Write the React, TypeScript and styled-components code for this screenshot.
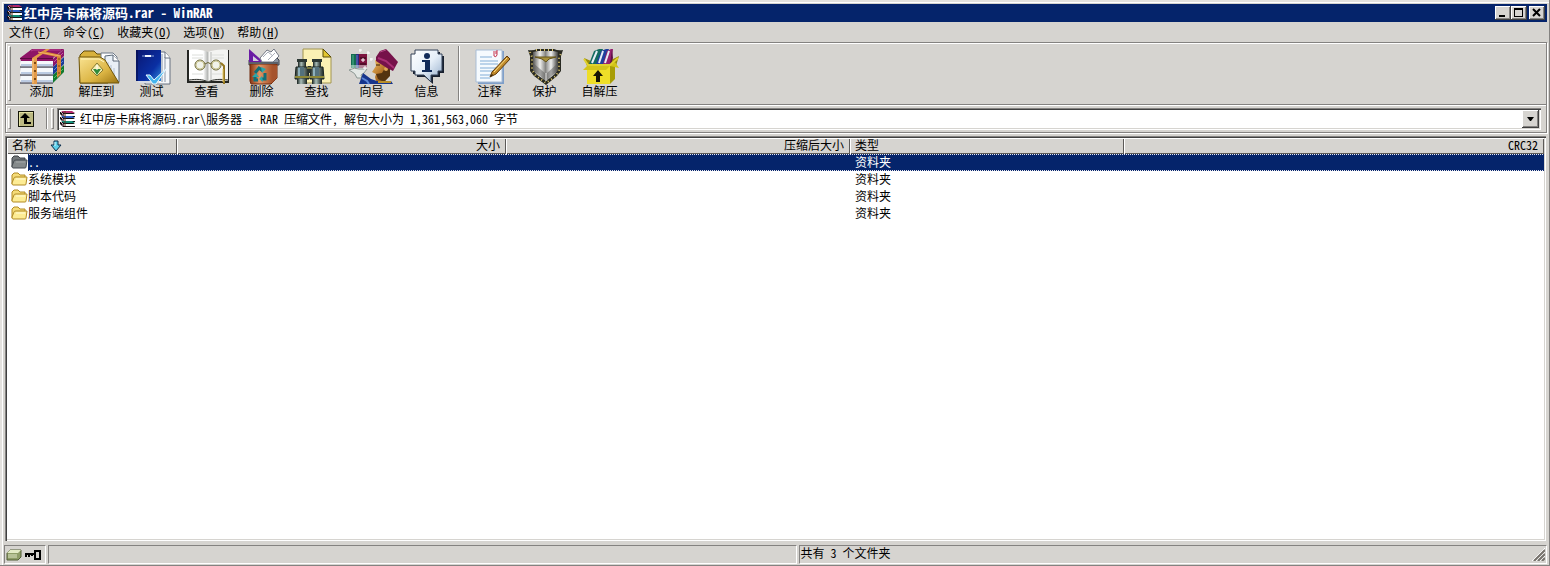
import React, { useState } from "react";
import styled, { createGlobalStyle, css } from "styled-components";

const face = "#d6d4d0";
const shadow = "#848280";
const light = "#ffffff";
const navy = "#05246b";

const GlobalStyle = createGlobalStyle`
  * { box-sizing: border-box; }
  body { margin: 0; background: ${face}; }
  body, button, select, table {
    font-family: "Noto Sans Mono CJK SC", "Noto Sans CJK SC", monospace;
    font-size: 12px;
    line-height: 16px;
    color: #000;
  }
  button { border: 0; padding: 0; background: none; }
`;

const raised = css`
  background: ${face};
  box-shadow: inset -1px -1px #404040, inset 1px 1px ${light}, inset -2px -2px ${shadow};
`;

const Window = styled.div`
  display: flex;
  flex-direction: column;
  min-height: 100vh;
  padding: 4px 3px 2px 4px;
  background: ${face};
  box-shadow: inset -1px -1px ${shadow}, inset 2px 2px #e4e2df, inset 3px 3px ${light};
`;

const TitleBar = styled.header`
  display: flex;
  align-items: center;
  height: 18px;
  padding: 0 2px;
  background: ${navy};
  color: #fff;
`;

const Title = styled.h1`
  flex: 1;
  margin: 0 0 0 1px;
  font-size: 13px;
  line-height: 18px;
  font-weight: 700;
`;

const CaptionButton = styled.button<{ $apart?: boolean }>`
  ${raised}
  display: grid;
  place-items: center;
  width: 16px;
  height: 14px;
  margin-left: ${(p) => (p.$apart ? 2 : 0)}px;
`;

const MenuBar = styled.nav`
  display: flex;
  height: 20px;
`;

const MenuItem = styled.button`
  padding: 0 7px 0 5px;
  line-height: 18px;
`;

const Rebar = styled.div`
  margin-left: 1px;
  border: 1px solid ${shadow};
  box-shadow: inset 1px 1px ${light}, 1px 1px ${light};
`;

const Band = styled.div<{ $height: number }>`
  display: flex;
  align-items: center;
  height: ${(p) => p.$height}px;
  padding: 2px 5px 2px 1px;
  & + & {
    border-top: 1px solid ${shadow};
    box-shadow: inset 0 1px ${light};
  }
`;

const Gripper = styled.span`
  align-self: stretch;
  width: 3px;
  margin: 1px 3px 1px 1px;
  border: 1px solid;
  border-color: ${light} ${shadow} ${shadow} ${light};
`;

const Divider = styled.span`
  align-self: stretch;
  width: 2px;
  margin: 1px 2px 1px 4px;
  border-left: 1px solid ${shadow};
  border-right: 1px solid ${light};
`;

const ToolButton = styled.button`
  display: flex;
  flex-direction: column;
  align-items: center;
  width: 55px;
  height: 52px;
  line-height: 10px;
`;

const UpButton = styled.button`
  display: grid;
  place-items: center;
  width: 24px;
  height: 20px;
  margin-right: 4px;
`;

const Combo = styled.div`
  flex: 1;
  display: grid;
  grid-template-columns: 20px 1fr 17px;
  align-items: center;
  height: 22px;
  padding: 2px;
  background: #fff;
  box-shadow: inset 1px 1px ${shadow}, inset 2px 2px #404040, inset -1px -1px ${light}, inset -2px -2px ${face};
`;

const PathSelect = styled.select`
  grid-area: 1 / 2 / 2 / 4;
  appearance: none;
  min-width: 0;
  height: 18px;
  padding: 0 1px;
  border: 0;
  border-radius: 0;
  outline: 0;
  background: transparent;
`;

const ComboArrow = styled.span`
  ${raised}
  grid-area: 1 / 3;
  display: grid;
  place-items: center;
  height: 18px;
  pointer-events: none;
`;

const ListPane = styled.main`
  flex: 1;
  margin: 3px 1px 4px;
  padding: 2px;
  background: #fff;
  box-shadow: inset 1px 1px ${shadow}, inset 2px 2px #404040, inset -1px -1px ${light}, inset -2px -2px ${face};
`;

const FileTable = styled.table`
  width: 100%;
  table-layout: fixed;
  border-collapse: collapse;
`;

const HeadCell = styled.th<{ $right?: boolean }>`
  height: 16px;
  padding: 0 6px 0 5px;
  background: ${face};
  box-shadow: inset 0 1px ${light}, inset 1px 0 ${light}, inset -1px -1px #5c5a58;
  font-weight: 400;
  line-height: 14px;
  vertical-align: top;
  text-align: ${(p) => (p.$right ? "right" : "left")};
  svg { margin-left: 14px; vertical-align: -2px; }
`;

const FileRow = styled.tr<{ $selected: boolean }>`
  ${(p) =>
    p.$selected &&
    css`
      color: #fff;
      td {
        background:
          repeating-linear-gradient(90deg, #e8e8f0 0 1px, ${navy} 1px 2px) top / 100% 1px no-repeat,
          repeating-linear-gradient(90deg, #e8e8f0 0 1px, ${navy} 1px 2px) bottom / 100% 1px no-repeat,
          ${navy};
      }
    `}
`;

const Cell = styled.td<{ $right?: boolean }>`
  height: 17px;
  padding: 0 5px;
  line-height: 15px;
  vertical-align: top;
  text-align: ${(p) => (p.$right ? "right" : "left")};
`;

const NameCell = styled(Cell)`
  padding: 0;
`;

const NameLine = styled.span`
  display: flex;
  align-items: flex-start;
`;

const IconWell = styled.span`
  display: grid;
  place-items: center end;
  width: 21px;
  height: 17px;
  background: #fff;
`;

const StatusBar = styled.footer`
  display: grid;
  grid-template-columns: 42px 1fr 1fr;
  gap: 2px;
  height: 19px;
`;

const Pane = styled.div`
  display: flex;
  align-items: center;
  gap: 3px;
  padding: 0 1px;
  border: 1px solid;
  border-color: ${shadow} ${light} ${light} ${shadow};
`;

const PaneText = styled.span`
  flex: 1;
  align-self: flex-start;
  line-height: 14px;
`;

const Art = ({ children }: { children: React.ReactNode }) => (
  <svg width="54" height="38" viewBox="0 0 54 38" aria-hidden="true">
    {children}
  </svg>
);

const AddIcon = () => (
  <Art>
    {[
      ["#8c1569", "#c7569f", 12],
      ["#1b3c98", "#5b82dd", 20],
      ["#127a2e", "#4fc06c", 28],
    ].map(([a, b, y]) => {
      const t = Number(y);
      return (
        <g key={t}>
          <path d={`M6 ${t}H38V${t + 7}H6L5 ${t + 4}Z`} fill="#f6f8fb" />
          <path d={`M6 ${t + 5}H38`} stroke="#bccbe2" strokeWidth="2" />
          <path d={`M5 ${t + 7}H38`} stroke="#1c2136" />
          <path d={`M38 ${t - 1}L49 ${t - 11}V${t - 4}L38 ${t + 7}Z`} fill={String(a)} />
          <path d={`M39 ${t + 2}L48 ${t - 7}`} stroke={String(b)} />
        </g>
      );
    })}
    <path d="M5 10L17 1H49L38 10V13H6Z" fill="#8f1466" />
    <path d="M16 3L18 2H46" fill="none" stroke="#b8438f" />
    <path d="M5 10.5H38" stroke="#5c0a40" />
    <path d="M17 10L31 1H35L22 10V36H17Z" fill="#e39a4a" />
    <path d="M23 5L28 3L46 7V26L42 30V9Z" fill="#d98537" />
    <path d="M23 4L45 8" stroke="#f2b469" />
    <path d="M18 11V35" stroke="#f8c988" />
    <path d="M20 14V35" stroke="#7a4812" strokeDasharray="2 6" strokeWidth="2" />
    <path d="M44 10V27" stroke="#7a4812" strokeDasharray="2 5" />
  </Art>
);

const ExtractIcon = () => (
  <Art>
    <defs>
      <linearGradient id="gFolder" x1="0" y1="0" x2="1" y2="1">
        <stop offset="0" stopColor="#f9e391" />
        <stop offset=".6" stopColor="#dcb544" />
        <stop offset="1" stopColor="#9b7412" />
      </linearGradient>
    </defs>
    <path d="M10 35V7L14 3H24L27 6H38V35Z" fill="#d8b13c" stroke="#5e4a0a" />
    <path d="M31 5H43L47 9V31H31Z" fill="#fff" stroke="#6c7888" />
    <path d="M35 8L43 7L49 13V34H35Z" fill="#e9f0f7" stroke="#596777" />
    <path d="M43 7V13H49" fill="#fff" stroke="#596777" />
    <path d="M38 14V32M41 17V32M44 20V32" stroke="#b5c3d4" />
    <path d="M9 9H30L35 12L49 35H10Z" fill="url(#gFolder)" stroke="#6e5409" />
    <path d="M11 11H29L34 14" fill="none" stroke="#fff6bd" />
    <path d="M27 15L33 22L27 28L21 22Z" fill="#f5eeb1" stroke="#847a33" />
    <path d="M23 21H31L27 27Z" fill="#2f8a3c" />
    <path d="M27 17V22" stroke="#fff" />
  </Art>
);

const TestIcon = () => (
  <Art>
    <defs>
      <linearGradient id="gBook" x1="0" y1="0" x2="1" y2="1">
        <stop offset="0" stopColor="#0a1670" />
        <stop offset=".65" stopColor="#0a2fa3" />
        <stop offset="1" stopColor="#3089dd" />
      </linearGradient>
    </defs>
    <path d="M30 4H40L45 10V36H20V32H30Z" fill="#f5f7fa" stroke="#677080" />
    <path d="M37 6V34M40 9V34" stroke="#8995a7" />
    <path d="M40 4V10H45" fill="#fff" stroke="#677080" />
    <path d="M11 2H36V33H11Z" fill="url(#gBook)" />
    <path d="M12 2V33" stroke="#040b43" />
    <path d="M17 8H29" stroke="#8fa9d9" />
    <path d="M20 8H26" stroke="#f2f6ff" strokeWidth="2" />
    <path d="M12 33H34V35H14Z" fill="#d7dce5" />
    <path d="M21 27L25 27L29 32L42 20L31 36H28Z" fill="#45b5ee" stroke="#eefaff" />
  </Art>
);

const ViewIcon = () => (
  <Art>
    <defs>
      <linearGradient id="gPage" x1="0" x2="1">
        <stop offset="0" stopColor="#fff" />
        <stop offset=".75" stopColor="#fff" />
        <stop offset="1" stopColor="#aeb0ae" />
      </linearGradient>
    </defs>
    <path d="M7 2H9V33H48V2H49V35H7Z" fill="#242522" />
    <path d="M9 2C16 1 24 2 28 4V34C23 31 16 31 9 32Z" fill="url(#gPage)" />
    <path d="M48 2C41 1 33 2 28 4V34C33 31 41 31 48 32Z" fill="#f4f4f2" />
    <path d="M28 4V34M31 4V32" stroke="#b8bab8" />
    <path d="M9 32C16 31 23 31 28 34C33 31 41 31 48 32" fill="none" stroke="#353733" />
    <path d="M12 7H23M12 10H23M32 7H44M32 10H44M12 26H23M32 26H44" stroke="#dcdedb" />
    <g fill="none" stroke="#686332" strokeWidth="1">
      <circle cx="20" cy="17" r="5" fill="#f1f3ea" />
      <circle cx="36" cy="17" r="5" fill="#f1f3ea" />
      <circle cx="20" cy="17" r="4" stroke="#c9c48f" />
      <circle cx="36" cy="17" r="4" stroke="#c9c48f" />
      <path d="M25 16Q28 13 31 16" />
      <path d="M41 15L44 18V36" stroke="#967820" strokeWidth="2" />
    </g>
    <path d="M43 21V34" stroke="#e7ca69" />
  </Art>
);

const DeleteIcon = () => (
  <Art>
    <defs>
      <linearGradient id="gBin" x1="0" x2="1">
        <stop offset="0" stopColor="#863414" />
        <stop offset=".35" stopColor="#e09565" />
        <stop offset="1" stopColor="#913a16" />
      </linearGradient>
    </defs>
    <path d="M14 12L17 9L20 13H38L41 9L44 12V17H14Z" fill="#8e95a2" stroke="#3d414a" />
    <path d="M14 16V1L31 16Z" fill="#6a1aa4" />
    <path d="M18 13V8L24 13Z" fill="#d5d0dd" />
    <path d="M25 10L32 2L36 4L39 1L44 8L38 14H27Z" fill="#fff" stroke="#727784" />
    <path d="M28 9L33 4L38 8M33 12L40 5" fill="none" stroke="#a9adb8" />
    <path d="M15 16H42V30L36 36H16L15 33Z" fill="url(#gBin)" stroke="#702a0d" />
    <path d="M14 15H43" stroke="#5b6069" strokeWidth="2" />
    <path d="M37 18L42 17V30L37 35Z" fill="#a6532d" />
    <g fill="none" stroke="#126f77" strokeWidth="3">
      <path d="M20 25L24 20L28 23" />
      <path d="M30 25L30 31H26" />
      <path d="M23 32H20V28" />
    </g>
    <path d="M26 19L31 21L27 25ZM27 28L24 31L28 34ZM17 29L21 25L24 29Z" fill="#2aa7aa" />
  </Art>
);

const FindIcon = () => (
  <Art>
    <defs>
      <linearGradient id="gBarrel" x1="0" x2="1">
        <stop offset="0" stopColor="#17201c" />
        <stop offset=".4" stopColor="#a9bdb8" />
        <stop offset="1" stopColor="#17201c" />
      </linearGradient>
    </defs>
    <path d="M13 1H33L41 9V35H13Z" fill="#fbf1b4" stroke="#a19451" />
    <path d="M33 1V9H41Z" fill="#e2c62f" stroke="#5b4d09" />
    {[5, 20].map((x) => (
      <g key={x} transform={`translate(${x} 0)`}>
        <path d="M3 11H11V19H3Z" fill="url(#gBarrel)" />
        <path d="M2 11H12V14H2Z" fill="#2c3733" />
        <path d="M1 19H13L14 31H0Z" fill="url(#gBarrel)" stroke="#1b2420" />
        <path d="M3 19H9V28H3Z" fill="#54717c" />
        <path d="M0 28H14V30H0Z" fill="#8d8736" />
        <path d="M2 31H12V36H2Z" fill="url(#gBarrel)" />
        <path d="M4 20V28" stroke="#8eb0bb" strokeWidth="2" />
      </g>
    ))}
    <path d="M18 18H21V25H18Z" fill="#29332f" />
    <path d="M17 20H22" stroke="#bfb447" />
  </Art>
);

const WizardIcon = () => (
  <Art>
    <defs>
      <linearGradient id="gSkin" x1="0" y1="0" x2="1" y2="1">
        <stop offset="0" stopColor="#f0c065" />
        <stop offset=".5" stopColor="#b9792c" />
        <stop offset="1" stopColor="#5e3513" />
      </linearGradient>
    </defs>
    <path d="M6 6H11V20H6Z" fill="#156a51" />
    <path d="M11 6H14V20H11Z" fill="#2b2b7c" />
    <path d="M14 6H22V20H14Z" fill="#7d143f" />
    <path d="M8 7V20" stroke="#4fb78d" />
    <path d="M12 7V20" stroke="#6a7bd0" />
    <path d="M15 10H21M15 16H21" stroke="#2a0715" />
    <path d="M6 17H22V21H6Z" fill="#e7f3ee" opacity=".5" />
    <path d="M4 22Q10 19 14 21L22 21L19 25L16 27L17 30H12Q11 25 4 22Z" fill="#e3e8e5" stroke="#8c9894" />
    <path d="M14 36L18 25L26 31L32 33H46L48 36Z" fill="#16358c" />
    <path d="M17 30L22 33L24 36" fill="none" stroke="#5c86d6" strokeWidth="2" />
    <path d="M30 12L45 16V27L40 33H31L30 29L31 26L27 24L31 18Z" fill="url(#gSkin)" />
    <path d="M31 26L37 25L40 20H45V28L39 34L33 31Z" fill="#54330f" />
    <circle cx="41" cy="21" r="2" fill="#e0a657" />
    <path d="M31 17H35" stroke="#3d2108" />
    <path d="M31 9L35 3L41 1L44 4L53 14L48 23L42 20L31 13Z" fill="#76124a" />
    <path d="M33 10L41 13L49 20" fill="none" stroke="#a92f74" strokeWidth="2" />
    <path d="M35 4L41 2" stroke="#b14a85" />
    <path d="M33 34H46" stroke="#b98f28" strokeWidth="2" />
    <path d="M15 1V4M14 2H17M23 3V6M22 5H25M26 10V13M25 11H28M18 10V14M16 12H20M20 18V22M18 20H22" stroke="#fff" />
  </Art>
);

const InfoIcon = () => (
  <Art>
    <defs>
      <linearGradient id="gBalloon" x1="0" y1="0" x2="1" y2="1">
        <stop offset="0" stopColor="#fff" />
        <stop offset=".5" stopColor="#e6eff8" />
        <stop offset="1" stopColor="#8fa9c8" />
      </linearGradient>
    </defs>
    <path d="M17 4H40V8H44V25H40V29H33V36L25 29H17V26H13V8H17Z" fill="#18202e" />
    <path
      d="M15 2H38V6H42V23H38V27H31V34L24 27H15V23H11V6H15Z"
      fill="url(#gBalloon)"
      stroke="#344258"
    />
    <circle cx="27" cy="8" r="3" fill="#112b58" />
    <path d="M22 12H30V22H32V24H22V22H25V14H22Z" fill="#112b58" />
  </Art>
);

const CommentIcon = () => (
  <Art>
    <path d="M15 3H41V36H15Z" fill="#7f9fc9" />
    <path d="M13 2H39V34H13Z" fill="#f5fafe" stroke="#a9bdd5" />
    <path d="M17 9H29M17 13H35M17 16H35M17 20H33M17 23H31M17 27H28M17 30H27" stroke="#82add6" />
    <path d="M31 3V8Q33 10 34 7V2M33 3V6" fill="none" stroke="#c6324c" />
    <path d="M27 29L29 24L44 8L47 11L33 26Z" fill="#c08a2a" stroke="#5d3809" />
    <path d="M31 24L44 10" stroke="#ffe088" />
    <path d="M27 29L29 26L30 27Z" fill="#23180b" />
  </Art>
);

const ProtectIcon = () => (
  <Art>
    <defs>
      <linearGradient id="gShield" x1="0" x2="1">
        <stop offset="0" stopColor="#555553" />
        <stop offset=".28" stopColor="#efefed" />
        <stop offset=".5" stopColor="#868683" />
        <stop offset=".72" stopColor="#f0f0ef" />
        <stop offset="1" stopColor="#3d3d3b" />
      </linearGradient>
    </defs>
    <path d="M10 2Q15 3 19 1H36Q40 3 45 2L43 8V23L39 28L28 37L16 28L12 23V8Z" fill="#292a22" />
    <path d="M15 4L20 3H35L40 4V22L37 26L28 33L18 26L15 22Z" fill="url(#gShield)" />
    <path d="M15 15L28 26L40 15V22L28 33L15 22Z" fill="#5c5c5a" opacity=".5" />
    <path d="M28 25V33" stroke="#efefed" />
    <path d="M17 9H38L31 11L28 14L24 11Z" fill="#a7903b" stroke="#655419" />
    <path
      d="M12 4L14 9V22L18 28L28 35L38 28L41 22V9L44 4M18 2H38"
      fill="none"
      stroke="#ddc66c"
      strokeDasharray="1 3"
      strokeWidth="2"
    />
  </Art>
);

const SfxIcon = () => (
  <Art>
    <path d="M11 10L18 13L40 11L46 8L43 18H14Z" fill="#998d08" />
    <path d="M16 16L21 3L26 1H30L25 16Z" fill="#136a5f" />
    <path d="M23 16L28 3L33 1H36L31 16Z" fill="#1f3f9e" />
    <path d="M30 16L34 3L38 1H40L38 16Z" fill="#962271" />
    <path d="M19 15L24 3M26 15L30 3M32 15L36 3" stroke="#e5edf5" strokeWidth="2" />
    <path d="M37 16L39 1L40 10L38 16Z" fill="#5d1146" />
    <path d="M14 18H37V36H14Z" fill="#eede28" />
    <path d="M37 18L42 14V31L37 36Z" fill="#a89d06" />
    <path d="M14 18L10 22L33 22L37 18L46 20L42 14L37 17Z" fill="#d3c51a" />
    <path d="M11 11L15 17H37L45 10" fill="none" stroke="#e0d22e" strokeWidth="2" />
    <path d="M23 34V28H20L25 22L30 28H27V34Z" fill="#171605" />
  </Art>
);

const ArchiveIcon = () => (
  <svg width="17" height="16" viewBox="0 0 17 16" aria-hidden="true">
    {["#b32a6d", "#3160c7", "#14907a"].map((color, i) => (
      <g key={color} transform={`translate(0 ${i * 5})`}>
        <path d="M1 1H13L16 3V6H4L1 3Z" fill="#141414" />
        <path d="M2 0H13L16 2H5Z" fill={color} />
        <path d="M5 3H16V5H5Z" fill="#fff" />
        <path d="M2 1L4 3V5" fill="none" stroke="#d9a7bc" />
      </g>
    ))}
    <path d="M6 0V15" stroke="#59351e" />
  </svg>
);

const FolderIcon = ({ dim }: { dim?: boolean }) => (
  <svg width="17" height="15" viewBox="0 0 17 15" aria-hidden="true">
    <path
      d="M1 12V3L3 1H7L9 3H14V6"
      fill={dim ? "#727779" : "#f5dc78"}
      stroke={dim ? "#3d4247" : "#b18a25"}
    />
    <path
      d="M2 13Q1 13 1 11L3 6Q3 5 5 5H16L15 12Q15 13 14 13Z"
      fill={dim ? "#858a8b" : "#fdec94"}
      stroke={dim ? "#454b50" : "#b18a25"}
    />
    <path d="M5 7H14" stroke={dim ? "#a4a8a8" : "#fffbd8"} />
  </svg>
);

const mainTools = [
  ["添加", AddIcon],
  ["解压到", ExtractIcon],
  ["测试", TestIcon],
  ["查看", ViewIcon],
  ["删除", DeleteIcon],
  ["查找", FindIcon],
  ["向导", WizardIcon],
  ["信息", InfoIcon],
] as const;

const extraTools = [
  ["注释", CommentIcon],
  ["保护", ProtectIcon],
  ["自解压", SfxIcon],
] as const;

const menus = [
  ["文件", "F"],
  ["命令", "C"],
  ["收藏夹", "O"],
  ["选项", "N"],
  ["帮助", "H"],
];

const files = ["..", "系统模块", "脚本代码", "服务端组件"];

export default function App() {
  const [selected, setSelected] = useState("..");
  return (
    <>
      <GlobalStyle />
      <Window>
        <TitleBar>
          <ArchiveIcon />
          <Title>红中房卡麻将源码.rar - WinRAR</Title>
          <CaptionButton aria-label="最小化">
            <svg width="10" height="10">
              <path d="M1 8H7" stroke="#000" strokeWidth="2" />
            </svg>
          </CaptionButton>
          <CaptionButton aria-label="最大化">
            <svg width="10" height="10" shapeRendering="crispEdges">
              <path d="M0 0H9V9H0ZM1 2V8H8V2Z" fillRule="evenodd" />
            </svg>
          </CaptionButton>
          <CaptionButton aria-label="关闭" $apart>
            <svg width="10" height="10">
              <path d="M1 1L8 8M8 1L1 8" stroke="#000" strokeWidth="2" />
            </svg>
          </CaptionButton>
        </TitleBar>
        <MenuBar>
          {menus.map(([label, key]) => (
            <MenuItem key={key}>
              {label}(<u>{key}</u>)
            </MenuItem>
          ))}
        </MenuBar>
        <Rebar>
          <Band $height={61}>
            <Gripper />
            {mainTools.map(([label, Icon]) => (
              <ToolButton key={label}>
                <Icon />
                {label}
              </ToolButton>
            ))}
            <Divider />
            {extraTools.map(([label, Icon]) => (
              <ToolButton key={label}>
                <Icon />
                {label}
              </ToolButton>
            ))}
          </Band>
          <Band $height={28}>
            <Gripper />
            <UpButton aria-label="上移一级">
              <svg width="16" height="16" viewBox="0 0 16 16">
                <path d="M0 0H16V16H0Z" fill="#15160a" />
                <path d="M1 1H15V15H1Z" fill="#e2e1a2" />
                <path d="M2 2H15V15H2Z" fill="#bcb982" />
                <path d="M7 2L12 7H9V11H13V13H6V7H2Z" fill="#000" />
              </svg>
            </UpButton>
            <Divider />
            <Gripper />
            <Combo>
              <ArchiveIcon />
              <PathSelect aria-label="路径">
                <option>红中房卡麻将源码.rar\服务器 - RAR 压缩文件, 解包大小为 1,361,563,060 字节</option>
              </PathSelect>
              <ComboArrow>
                <svg width="7" height="4">
                  <path d="M0 0H7L4 4H3Z" />
                </svg>
              </ComboArrow>
            </Combo>
          </Band>
        </Rebar>
        <ListPane>
          <FileTable>
            <colgroup>
              <col width="170" />
              <col width="329" />
              <col width="344" />
              <col width="274" />
              <col />
            </colgroup>
            <thead>
              <tr>
                <HeadCell>
                  名称
                  <svg width="12" height="12" viewBox="0 0 12 12" aria-hidden="true">
                    <path d="M4 1H8V5H11L6 11L1 5H4Z" fill="#5fd0ea" stroke="#0a2c4c" />
                    <path d="M5 2V6" stroke="#d8f7ff" />
                  </svg>
                </HeadCell>
                <HeadCell $right>大小</HeadCell>
                <HeadCell $right>压缩后大小</HeadCell>
                <HeadCell>类型</HeadCell>
                <HeadCell $right>CRC32</HeadCell>
              </tr>
            </thead>
            <tbody>
              {files.map((name) => (
                <FileRow key={name} $selected={name === selected} onClick={() => setSelected(name)}>
                  <NameCell>
                    <NameLine>
                      <IconWell>
                        <FolderIcon dim={name === selected} />
                      </IconWell>
                      {name}
                    </NameLine>
                  </NameCell>
                  <Cell $right />
                  <Cell $right />
                  <Cell>资料夹</Cell>
                  <Cell $right />
                </FileRow>
              ))}
            </tbody>
          </FileTable>
        </ListPane>
        <StatusBar>
          <Pane>
            <svg width="16" height="12" viewBox="0 0 16 12" aria-hidden="true">
              <path d="M1 4L4 1H15V8L12 11H1Z" fill="#8e9d68" stroke="#525e36" />
              <path d="M1 4H12L15 1H4Z" fill="#e3ebc6" />
              <path d="M2 6H11M2 8H11" stroke="#dfe6c5" />
            </svg>
            <svg width="17" height="10" viewBox="0 0 17 10" aria-hidden="true">
              <path d="M0 4H10M1 4V7M4 4V7M7 4V6" stroke="#000" strokeWidth="2" />
              <path d="M10 1H15V9H10Z" fill="none" stroke="#000" strokeWidth="2" />
            </svg>
          </Pane>
          <Pane />
          <Pane>
            <PaneText>共有 3 个文件夹</PaneText>
            <svg width="13" height="13" viewBox="0 0 13 13" aria-hidden="true">
              <path d="M0 13L13 0M4 13L13 4M8 13L13 8" stroke="#fff" />
              <path d="M2 13L13 2M6 13L13 6M10 13L13 10" stroke="#77736d" strokeWidth="2" />
            </svg>
          </Pane>
        </StatusBar>
      </Window>
    </>
  );
}
